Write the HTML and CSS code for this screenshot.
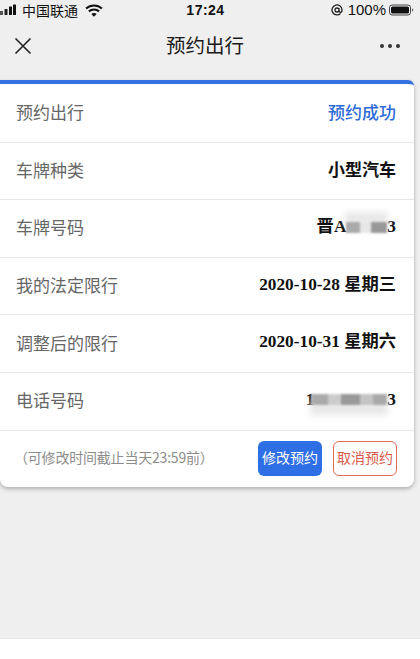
FILE: index.html
```html
<!DOCTYPE html>
<html lang="zh">
<head>
<meta charset="utf-8">
<title>预约出行</title>
<link rel="stylesheet" href="styles.css">
</head>
<body>
<div class="page">
  <div class="status">
    <div class="status-left">
      <svg class="signal" width="17" height="12" viewBox="0 0 17 12"><rect x="0" y="7" width="3" height="4" fill="#555"/><rect x="4.500" y="5" width="3" height="6" rx=".5" fill="#222"/><rect x="9" y="2.500" width="3" height="8.500" rx=".5" fill="#111"/><rect x="13" y="0.500" width="3" height="10.500" rx=".5" fill="#111"/></svg>
      <span class="carrier">中国联通</span>
      <svg class="wifi" width="18" height="13" viewBox="0 0 17 12"><path d="M1 4.200C5.200.3 11.800.3 16 4.200" fill="none" stroke="#111" stroke-width="2"/><path d="M3.700 6.800C6.400 4.400 10.600 4.400 13.300 6.800" fill="none" stroke="#111" stroke-width="2"/><path d="M6 9.200c1.500-1.200 3.500-1.200 5 0l-2.500 2.600z" fill="#111"/></svg>
    </div>
    <div class="time">17:24</div>
    <div class="status-right">
      <svg width="12" height="12" viewBox="0 0 12 12"><path d="M9.500 9.500A5 5 0 1 1 11 6c0 1.500-.6 2.300-1.500 2.300S8 7.600 8 6.500V4M8 6a2 2 0 1 1-4 0 2 2 0 0 1 4 0z" fill="none" stroke="#222" stroke-width="1.300"/></svg>
      <span class="pct">100%</span>
      <svg width="25" height="12" viewBox="0 0 25 12"><rect x=".5" y="1" width="21" height="10" rx="2.500" fill="none" stroke="#444"/><rect x="2" y="2.500" width="18" height="7" rx="1.500" fill="#111"/><path d="M23 4.500c.8.200 1.200.8 1.200 1.500s-.4 1.300-1.200 1.500z" fill="#555"/></svg>
    </div>
  </div>
  <div class="nav">
    <svg class="close" width="18" height="18" viewBox="0 0 18 18"><path d="M1.500 1.500l15 15M16.500 1.500l-15 15" stroke="#222" stroke-width="1.600" fill="none"/></svg>
    <div class="nav-title">预约出行</div>
    <div class="more"><i></i><i></i><i></i></div>
  </div>
  <div class="card">
    <div class="row"><span class="label">预约出行</span><span class="value blue">预约成功</span></div>
    <div class="row"><span class="label">车牌种类</span><span class="value cjk">小型汽车</span></div>
    <div class="row"><span class="label">车牌号码</span><span class="value">晋A<span class="blur plate"></span>3</span></div>
    <div class="row"><span class="label">我的法定限行</span><span class="value">2020-10-28 星期三</span></div>
    <div class="row"><span class="label">调整后的限行</span><span class="value">2020-10-31 星期六</span></div>
    <div class="row"><span class="label">电话号码</span><span class="value">1<span class="blur phone"></span>3</span></div>
    <div class="foot">
      <span class="note">（可修改时间截止当天23:59前）</span>
      <div class="btns">
        <span class="btn primary">修改预约</span>
        <span class="btn ghost">取消预约</span>
      </div>
    </div>
  </div>
  <div class="spacer"></div>
  <div class="bottom"></div>
</div>
</body>
</html>
```
FILE: styles.css
```css
* { box-sizing: border-box; }
html, body { margin: 0; padding: 0; }
body { width: 420px; height: 659px; overflow: hidden; background: #efefef; font-family: "Noto Sans CJK SC", "Liberation Sans", sans-serif; }
.page { width: 420px; height: 659px; display: flex; flex-direction: column; }
.status { height: 20px; display: flex; align-items: center; justify-content: space-between; padding: 0 6px 0 0; color: #111; flex: none; position: relative; }
.status-left { display: flex; align-items: center; gap: 5px; }
.carrier { font-size: 14px; line-height: 20px; }
.wifi { margin-left: 2px; }
.time { position: absolute; left: 0; right: 0; text-align: center; font: 700 14px/20px "Liberation Sans", sans-serif; letter-spacing: .5px; padding-right: 9px; }
.status-right { display: flex; align-items: center; gap: 3px; }
.pct { font: 15px/20px "Liberation Sans", sans-serif; margin-left: 2px; }
.nav { height: 60px; flex: none; display: flex; align-items: center; justify-content: space-between; padding: 0 20px 0 14px; position: relative; }
.close { margin-top: -8px; }
.nav-title { position: absolute; left: 0; right: 0; top: 10px; text-align: center; font-size: 19.500px; line-height: 30px; color: #1a1a1a; padding-right: 10px; }
.more { display: flex; gap: 4px; margin-top: -8px; }
.more i { width: 4px; height: 4px; border-radius: 50%; background: #333; }
.card { width: 414px; height: 407px; flex: none; background: #fff; border-top: 4px solid #3570e3; border-radius: 0 6px 8px 8px; box-shadow: 0 2px 4px rgba(0,0,0,.28); display: flex; flex-direction: column; padding-top: 1px; }
.row { height: 57.600px; flex: none; display: flex; align-items: center; justify-content: space-between; padding: 0 18px 3px 16px; border-bottom: 1px solid #e6e6e6; }
.label { font-size: 17px; color: #666; }
.value { font: 700 17.300px/24px "Liberation Serif", "Noto Sans CJK SC", serif; color: #111; display: flex; align-items: center; white-space: pre; }
.value.blue { color: #2f6bd8; font-family: "Noto Sans CJK SC", sans-serif; font-size: 17px; font-weight: 500; }
.value.cjk { font-family: "Noto Sans CJK SC", sans-serif; font-size: 17px; }
.blur { display: block; filter: blur(1px); height: 11px; }
.plate { width: 41px; margin-top: 2px; background: linear-gradient(90deg, #aaa 0 33%, #e8e8e8 33% 62%, #999 62% 100%); box-shadow: 0 -9px 6px 1px #e8e8e8; }
.phone { width: 76px; margin-left: -3px; background: linear-gradient(90deg, #aaa 0 22%, #ccc 22% 40%, #999 40% 64%, #c4c4c4 64% 82%, #aaa 82% 100%); box-shadow: 0 9px 6px 1px #e8e8e8; }
.foot { flex: 1; display: flex; align-items: center; justify-content: space-between; padding: 0 17px 0 14px; }
.note { font-size: 14px; color: #8c8c8c; letter-spacing: -.2px; margin-bottom: 3px; }
.btns { display: flex; gap: 11px; margin-bottom: 1px; }
.btn { width: 64px; height: 35px; border-radius: 6px; font-size: 14px; line-height: 33px; text-align: center; white-space: nowrap; }
.primary { background: #2f6fe6; color: #fff; }
.ghost { border: 1px solid #e06a5c; color: #d9584a; line-height: 31px; }
.spacer { flex: 1; }
.bottom { height: 21px; flex: none; background: #fff; border-top: 1px solid #eaeaea; }
```
